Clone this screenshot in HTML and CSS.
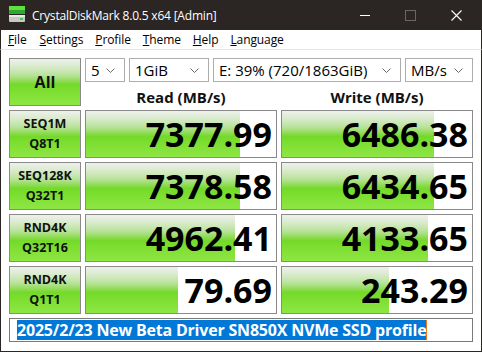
FILE: index.html
```html
<!DOCTYPE html>
<html>
<head>
<meta charset="utf-8">
<link rel="stylesheet" href="styles.css">
</head>
<body>
<div class="window">
  <div class="titlebar">
    <svg class="appicon" width="16" height="16" viewBox="0 0 16 16">
      <rect x="0" y="0" width="16" height="4" fill="#5fe03a"/>
      <rect x="0" y="4" width="16" height="4" fill="#2fa832"/>
      <rect x="0" y="9" width="16" height="7" rx="1" fill="#c8c8c8"/>
      <rect x="0" y="9" width="16" height="2" fill="#e8e8e8"/>
      <rect x="11" y="12" width="3" height="2" fill="#3bd13b"/>
    </svg>
    <span class="title">CrystalDiskMark 8.0.5 x64 [Admin]</span>
    <div class="controls">
      <svg class="ctl" width="46" height="30" viewBox="0 0 46 30"><line x1="18" y1="15.5" x2="28" y2="15.5" stroke="#fff" stroke-width="1"/></svg>
      <svg class="ctl" width="46" height="30" viewBox="0 0 46 30"><rect x="17.5" y="10.5" width="10" height="10" fill="none" stroke="#6b6563" stroke-width="1"/></svg>
      <svg class="ctl" width="46" height="30" viewBox="0 0 46 30"><path d="M17.5 10.5 L27.5 20.5 M27.5 10.5 L17.5 20.5" stroke="#fff" stroke-width="1.1"/></svg>
    </div>
  </div>
  <div class="menubar">
    <span class="mi"><u>F</u>ile</span>
    <span class="mi"><u>S</u>ettings</span>
    <span class="mi"><u>P</u>rofile</span>
    <span class="mi"><u>T</u>heme</span>
    <span class="mi"><u>H</u>elp</span>
    <span class="mi"><u>L</u>anguage</span>
  </div>
  <div class="content">
    <div class="top">
      <div class="btn green all">All</div>
      <div class="topright">
        <div class="selects">
          <div class="sel w40"><span>5</span><svg width="9" height="5" viewBox="0 0 9 5"><polyline points="0.5,0.5 4.5,4.5 8.5,0.5" fill="none" stroke="#6a6a6a" stroke-width="1"/></svg></div>
          <div class="sel w80"><span>1GiB</span><svg width="9" height="5" viewBox="0 0 9 5"><polyline points="0.5,0.5 4.5,4.5 8.5,0.5" fill="none" stroke="#6a6a6a" stroke-width="1"/></svg></div>
          <div class="sel w188"><span>E: 39% (720/1863GiB)</span><svg width="9" height="5" viewBox="0 0 9 5"><polyline points="0.5,0.5 4.5,4.5 8.5,0.5" fill="none" stroke="#6a6a6a" stroke-width="1"/></svg></div>
          <div class="sel w68"><span>MB/s</span><svg width="9" height="5" viewBox="0 0 9 5"><polyline points="0.5,0.5 4.5,4.5 8.5,0.5" fill="none" stroke="#6a6a6a" stroke-width="1"/></svg></div>
        </div>
        <div class="headers">
          <div class="hdr">Read (MB/s)</div>
          <div class="hdr">Write (MB/s)</div>
        </div>
      </div>
    </div>

    <div class="row">
      <div class="btn green label">SEQ1M<br>Q8T1</div>
      <div class="val"><div class="bar" style="width:81.1%"></div><span>7377.99</span></div>
      <div class="val"><div class="bar" style="width:80.2%"></div><span>6486.38</span></div>
    </div>
    <div class="row">
      <div class="btn green label">SEQ128K<br>Q32T1</div>
      <div class="val"><div class="bar" style="width:81.1%"></div><span>7378.58</span></div>
      <div class="val"><div class="bar" style="width:80.1%"></div><span>6434.65</span></div>
    </div>
    <div class="row">
      <div class="btn green label">RND4K<br>Q32T16</div>
      <div class="val"><div class="bar" style="width:78.3%"></div><span>4962.41</span></div>
      <div class="val"><div class="bar" style="width:76.9%"></div><span>4133.65</span></div>
    </div>
    <div class="row">
      <div class="btn green label">RND4K<br>Q1T1</div>
      <div class="val"><div class="bar" style="width:48.4%"></div><span>79.69</span></div>
      <div class="val"><div class="bar" style="width:56.4%"></div><span>243.29</span></div>
    </div>

    <div class="comment"><span class="selected">2025/2/23 New Beta Driver SN850X NVMe SSD profile</span><span class="caret"></span></div>
  </div>
</div>
</body>
</html>
```

FILE: styles.css
```css
* { box-sizing: border-box; }
html, body { margin: 0; padding: 0; }
body {
  width: 482px;
  height: 352px;
  background: #ffffff;
  font-family: "Open Sans", "Noto Sans", sans-serif;
  overflow: hidden;
}
.window {
  width: 482px;
  height: 352px;
  display: flex;
  flex-direction: column;
}
.titlebar {
  height: 30px;
  background: #2b2523;
  display: flex;
  align-items: center;
  color: #ffffff;
  padding-left: 9px;
}
.appicon { margin-top: -2px; flex: none; }
.title {
  margin-left: 7px;
  font-size: 12px;
  letter-spacing: -0.2px;
  flex: 1;
}
.controls { display: flex; height: 30px; margin-right: 2px; }
.ctl { display: block; }
.menubar {
  height: 20px;
  background: #ffffff;
  display: flex;
  align-items: center;
  font-size: 12px;
  letter-spacing: -0.1px;
  color: #000;
  padding-left: 1px;
  border-bottom: 1px solid #e6e6e6;
  border-left: 1px solid #2b2523;
  border-right: 1px solid #2b2523;
}
.mi { padding: 0 6px 0 6px; }
.mi:nth-child(2) { padding-left: 7px; }
.content {
  flex: 1;
  border-left: 1px solid #2b2523;
  border-right: 1px solid #2b2523;
  border-bottom: 1px solid #2b2523;
  padding: 8px 8px 0 8px;
  display: flex;
  flex-direction: column;
  gap: 4px;
}
.top {
  display: flex;
  gap: 4px;
  height: 48px;
}
.green {
  background: linear-gradient(to bottom, #eef1eb 0%, #dcebd0 15%, #b8e39a 35%, #8fdb55 48%, #74d92a 55%, #7ddf30 70%, #8ee546 100%);
  border: 1px solid #8a8a8a;
}
.btn {
  width: 72px;
  display: flex;
  align-items: center;
  justify-content: center;
  text-align: center;
  color: #111;
  font-weight: 700;
}
.all { font-size: 16px; height: 48px; }
.topright { display: flex; flex-direction: column; width: 388px; }
.selects { display: flex; gap: 4px; height: 24px; }
.sel {
  height: 24px;
  border: 1px solid #adadad;
  background: #fff;
  display: flex;
  align-items: center;
  justify-content: space-between;
  padding: 0 9px 0 5px;
  font-size: 15px;
  color: #000;
}
.sel span { line-height: 1; }
.w40 { width: 40px; }
.w80 { width: 80px; }
.w188 { width: 188px; }
.w68 { width: 68px; }
.headers {
  display: flex;
  gap: 4px;
  height: 24px;
  align-items: center;
}
.hdr {
  width: 192px;
  text-align: center;
  font-size: 15px;
  font-weight: 700;
  color: #111;
  padding-top: 6px;
}
.row {
  display: flex;
  gap: 4px;
  height: 48px;
}
.label {
  height: 48px;
  font-size: 12.5px;
  line-height: 20px;
}
.val {
  width: 192px;
  height: 48px;
  border: 1px solid #8a8a8a;
  background: #fff;
  position: relative;
  display: flex;
  align-items: center;
  justify-content: flex-end;
  padding-right: 4px;
}
.bar {
  position: absolute;
  left: 0;
  top: 0;
  bottom: 0;
  background: linear-gradient(to bottom, #eef1eb 0%, #dcebd0 15%, #b8e39a 35%, #8fdb55 48%, #74d92a 55%, #7ddf30 70%, #8ee546 100%);
}
.val span {
  position: relative;
  font-size: 34px;
  font-weight: 700;
  color: #000;
  line-height: 1;
}
.comment {
  height: 24px;
  border: 1px solid #7a7a7a;
  background: #fff;
  display: flex;
  align-items: center;
  padding-left: 7px;
}
.selected {
  background: #0078d7;
  color: #fff;
  font-weight: 700;
  font-size: 16px;
  letter-spacing: -0.2px;
  line-height: 20px;
  height: 20px;
  white-space: nowrap;
}
.caret {
  width: 1px;
  height: 20px;
  background: #e87a20;
}
```
